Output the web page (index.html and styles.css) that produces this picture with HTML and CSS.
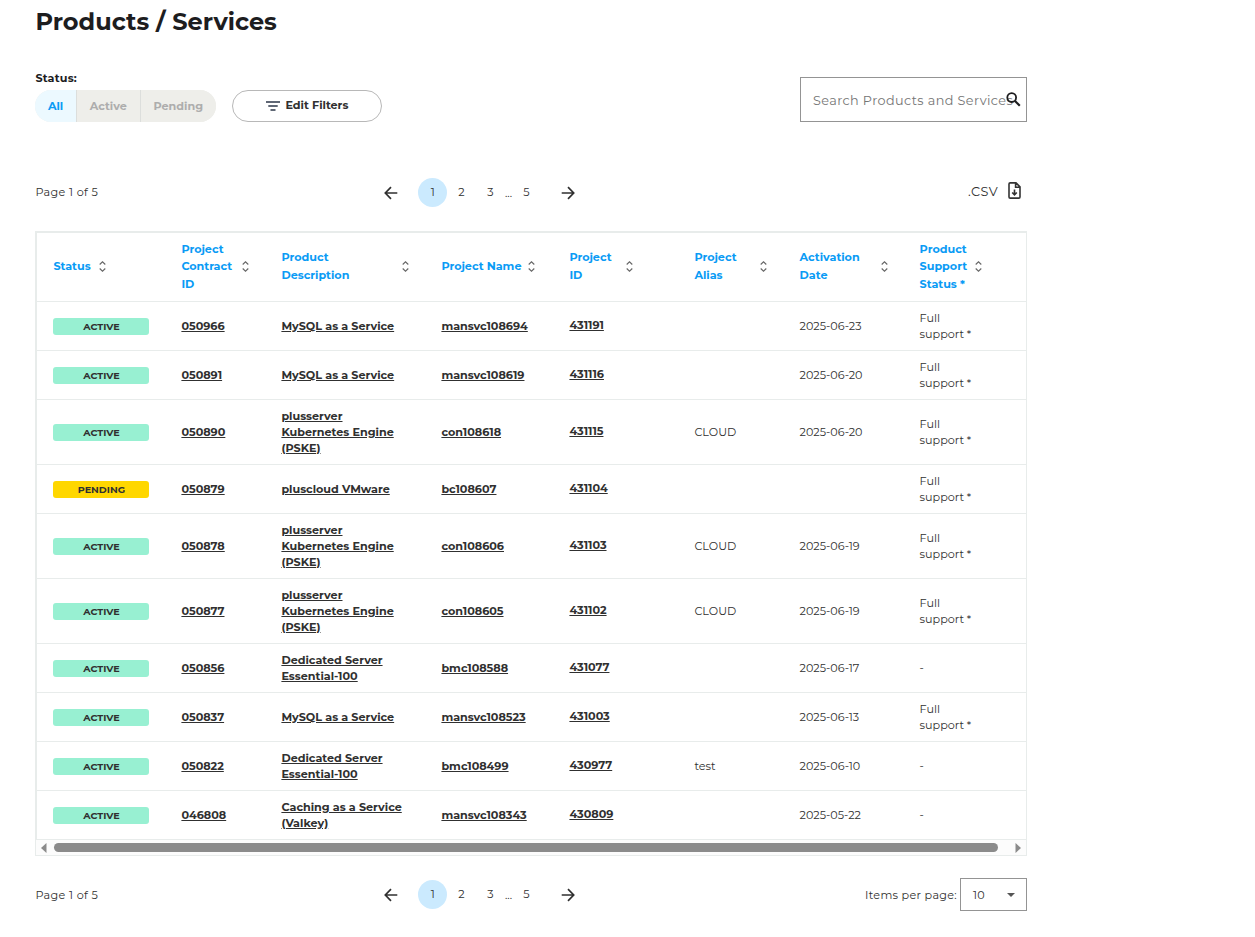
FILE: index.html
```html
<!DOCTYPE html>
<html lang="en"><head><meta charset="utf-8"><title>Products / Services</title><link rel="stylesheet" href="styles.css"></head>
<body>
<svg class="defs" width="0" height="0">
<symbol id="sort" viewBox="0 0 7 11"><path d="M.7 3.5 3.5.8l2.8 2.7M.7 7.5l2.8 2.7 2.8-2.7" fill="none" stroke="#666" stroke-width="1.1"/></symbol>
<symbol id="prev" viewBox="0 0 14 14"><path d="M13.3 7H1.5M7 1.2 1.3 7 7 12.8" fill="none" stroke="#303030" stroke-width="1.7"/></symbol>
<symbol id="next" viewBox="0 0 14 14"><path d="M.7 7h11.8M7 1.2 12.7 7 7 12.8" fill="none" stroke="#303030" stroke-width="1.7"/></symbol>
</svg>
<main class="page">
<h1 class="title">Products / Services</h1>
<section class="toolbar">
<div class="status"><div class="status-label">Status:</div>
<div class="controls"><div class="segments"><button class="seg on">All</button><button class="seg act">Active</button><button class="seg pen">Pending</button></div>
<button class="edit"><svg width="14" height="10" viewBox="0 0 14 10"><path d="M0 1h14M2.3 5h9.4M4.5 9h5" stroke="#5f6775" stroke-width="1.8"/></svg><span>Edit Filters</span></button></div></div>
<div class="search"><span class="ph">Search Products and Services</span><svg class="glass" width="15" height="15" viewBox="0 0 15 15"><circle cx="5.7" cy="5.6" r="4.4" fill="none" stroke="#1d1d1f" stroke-width="1.8"/><path d="m8.8 8.8 5 5" stroke="#1d1d1f" stroke-width="2.2"/></svg></div>
</section>
<nav class="pager top"><span class="count">Page 1 of 5</span>
<div class="pages"><svg width="14" height="14"><use href="#prev"/></svg><b class="num cur">1</b><b class="num">2</b><b class="num">3</b><b class="dots">...</b><b class="num last">5</b><svg width="14" height="14"><use href="#next"/></svg></div>
<div class="csv"><span>.CSV</span><svg width="13" height="17" viewBox="0 0 13 17"><path d="M1 2.1Q1 .9 2.2.9H8l4 4v10q0 1.2-1.2 1.2H2.2Q1 16.1 1 14.9zM7.6 1v4.3H12M6.5 7.5v5.3M4.2 10.5l2.3 2.4 2.3-2.4" fill="none" stroke="#333" stroke-width="1.6"/></svg></div></nav>
<div class="grid">
<table class="table">
<colgroup><col class="c1"><col class="c2"><col class="c3"><col class="c4"><col class="c5"><col class="c6"><col class="c7"><col class="c8"></colgroup>
<thead><tr>
<th><div class="head h1"><span>Status</span><svg width="7" height="11"><use href="#sort"/></svg></div></th>
<th><div class="head h2"><span>Project<br>Contract<br>ID</span><svg width="7" height="11"><use href="#sort"/></svg></div></th>
<th><div class="head h3"><span>Product<br>Description</span><svg width="7" height="11"><use href="#sort"/></svg></div></th>
<th><div class="head h4"><span>Project Name</span><svg width="7" height="11"><use href="#sort"/></svg></div></th>
<th><div class="head h5"><span>Project<br>ID</span><svg width="7" height="11"><use href="#sort"/></svg></div></th>
<th><div class="head h6"><span>Project<br>Alias</span><svg width="7" height="11"><use href="#sort"/></svg></div></th>
<th><div class="head h7"><span>Activation<br>Date</span><svg width="7" height="11"><use href="#sort"/></svg></div></th>
<th><div class="head h8"><span>Product<br>Support<br>Status *</span><svg width="7" height="11"><use href="#sort"/></svg></div></th>
</tr></thead>
<tbody>
<tr><td><div class="badge">ACTIVE</div></td><td><a>050966</a></td><td><a>MySQL as a Service</a></td><td><a>mansvc108694</a></td><td class="pid"><a>431191</a></td><td></td><td>2025-06-23</td><td>Full<br>support *</td></tr>
<tr><td><div class="badge">ACTIVE</div></td><td><a>050891</a></td><td><a>MySQL as a Service</a></td><td><a>mansvc108619</a></td><td class="pid"><a>431116</a></td><td></td><td>2025-06-20</td><td>Full<br>support *</td></tr>
<tr class="tall"><td><div class="badge">ACTIVE</div></td><td><a>050890</a></td><td><a>plusserver<br>Kubernetes Engine<br>(PSKE)</a></td><td><a>con108618</a></td><td class="pid"><a>431115</a></td><td>CLOUD</td><td>2025-06-20</td><td>Full<br>support *</td></tr>
<tr><td><div class="badge wait">PENDING</div></td><td><a>050879</a></td><td><a>pluscloud VMware</a></td><td><a>bc108607</a></td><td class="pid"><a>431104</a></td><td></td><td></td><td>Full<br>support *</td></tr>
<tr class="tall"><td><div class="badge">ACTIVE</div></td><td><a>050878</a></td><td><a>plusserver<br>Kubernetes Engine<br>(PSKE)</a></td><td><a>con108606</a></td><td class="pid"><a>431103</a></td><td>CLOUD</td><td>2025-06-19</td><td>Full<br>support *</td></tr>
<tr class="tall"><td><div class="badge">ACTIVE</div></td><td><a>050877</a></td><td><a>plusserver<br>Kubernetes Engine<br>(PSKE)</a></td><td><a>con108605</a></td><td class="pid"><a>431102</a></td><td>CLOUD</td><td>2025-06-19</td><td>Full<br>support *</td></tr>
<tr><td><div class="badge">ACTIVE</div></td><td><a>050856</a></td><td><a>Dedicated Server<br>Essential-100</a></td><td><a>bmc108588</a></td><td class="pid"><a>431077</a></td><td></td><td>2025-06-17</td><td>-</td></tr>
<tr><td><div class="badge">ACTIVE</div></td><td><a>050837</a></td><td><a>MySQL as a Service</a></td><td><a>mansvc108523</a></td><td class="pid"><a>431003</a></td><td></td><td>2025-06-13</td><td>Full<br>support *</td></tr>
<tr><td><div class="badge">ACTIVE</div></td><td><a>050822</a></td><td><a>Dedicated Server<br>Essential-100</a></td><td><a>bmc108499</a></td><td class="pid"><a>430977</a></td><td>test</td><td>2025-06-10</td><td>-</td></tr>
<tr><td><div class="badge">ACTIVE</div></td><td><a>046808</a></td><td><a>Caching as a Service<br>(Valkey)</a></td><td><a>mansvc108343</a></td><td class="pid"><a>430809</a></td><td></td><td>2025-05-22</td><td>-</td></tr>
</tbody></table>
<div class="scroll"><svg width="6" height="10"><path d="M5.5 0v10L0 5z" fill="#8b8b8b"/></svg><div class="thumb"></div><svg width="6" height="10"><path d="M.5 0v10L6 5z" fill="#8b8b8b"/></svg></div>
</div>
<nav class="pager bottom"><span class="count">Page 1 of 5</span>
<div class="pages"><svg width="14" height="14"><use href="#prev"/></svg><b class="num cur">1</b><b class="num">2</b><b class="num">3</b><b class="dots">...</b><b class="num last">5</b><svg width="14" height="14"><use href="#next"/></svg></div>
<div class="per"><span>Items per page:</span><div class="select"><span>10</span><svg width="8" height="4"><path d="M0 0h8L4 4z" fill="#555"/></svg></div></div></nav>
</main>
</body></html>
```
FILE: styles.css
```css
*{box-sizing:border-box}
body{margin:0;background:#fff;color:#303030;font-family:Montserrat,Inter,sans-serif;font-size:11.2px;overflow:hidden}
button{font:inherit;border:0;padding:0;margin:0}
svg{display:block;flex:none}
.defs{position:absolute}
.page{width:1027px;padding-left:35.4px}
.title{margin:0;height:70px;padding-top:8px;font-size:24px;line-height:28px;font-weight:700;color:#1d1d1f}
.toolbar{display:flex;justify-content:space-between;height:108px}
.status-label{height:20px;line-height:17px;font-weight:700;letter-spacing:.2px;color:#1d1d1f}
.controls{display:flex;gap:16px}
.segments{display:flex;width:181px;height:32px;border-radius:16px;overflow:hidden;background:#eeeeea}
.seg{background:#eeeeea;color:#adadad;font-weight:700;border-right:1px solid #dcdedc}
.on{width:41.4px;background:#ecf9ff;color:#0a9bf5}
.act{width:64px}
.pen{width:75px;border:0}
.edit{display:flex;align-items:center;justify-content:center;gap:5px;width:150px;height:32px;border:1px solid #b8b8b8;border-radius:16px;background:#fff;color:#303030;font-weight:700}
.edit span{padding-bottom:2px}
.search{position:relative;width:227px;height:45px;margin-top:7px;border:1px solid #949494;padding-left:12px;line-height:45px;font-size:12.8px;letter-spacing:.4px;color:#757575;white-space:nowrap}
.glass{position:absolute;left:204.5px;top:14px}
.pager{display:grid;grid-template-columns:349px 1fr auto;align-items:center}
.count{letter-spacing:.36px}
.top{height:29px;margin-bottom:24px}
.top .count,.top .csv{padding-bottom:2px}
.bottom{height:33px;margin-top:22px}
.pages{display:flex;align-items:center}
.num{width:29px;height:29px;line-height:29px;text-align:center;font-weight:400}
.cur{margin:0 -.5px 0 20px;border-radius:50%;background:#cbeafe}
.dots{width:7px;font-weight:400;text-align:center}
.last{margin:0 20.5px 0 0}
.csv{display:flex;align-items:center;gap:10px;margin-right:6px;font-size:12.8px;letter-spacing:.4px}
.csv svg{margin-bottom:2px}
.grid{height:625px;border:1px solid #e8eceb;border-top-width:2px}
.table{width:989.6px;table-layout:fixed;border-collapse:separate;border-spacing:0;border-left:1px solid #e8eceb}
.c1{width:128px}.c2{width:100px}.c3{width:160px}.c4{width:128px}.c5{width:125px}.c6{width:105.2px}.c7{width:120px}.c8{width:122.4px}
th{height:69px;padding:0 0 0 16px;text-align:left;color:#0a9bf5;line-height:17.6px;font-weight:700;border-bottom:1px solid #e8eceb}
.head{display:flex;align-items:center}
.head span{white-space:nowrap}
.head svg{margin-bottom:2px}
.h1 span{width:45.4px}.h2 span{width:61px}.h3 span{width:121px}.h4 span{width:87px}.h5 span{width:57px}.h6 span{width:66px}.h7 span{width:81px}.h8 span{width:55px}
td{height:49px;padding:0 0 0 16px;line-height:16px;border-bottom:1px solid #e8eceb;white-space:nowrap}
.tall td{height:65px}
td a{font-weight:700;text-decoration:underline}
.pid{padding-bottom:2px}
.badge{width:96px;height:17px;border-radius:3px;background:#98f0d2;text-align:center;font-size:9.6px;font-weight:700;line-height:18px}
.wait{background:#ffd700}
.scroll{display:flex;align-items:center;height:15px;background:#fcfcfc;padding:0 5px}
.thumb{width:944px;height:9px;margin:0 auto 0 7px;border-radius:5px;background:#8b8b8b}
.per{display:flex;align-items:center;gap:3px;letter-spacing:.3px}
.select{display:flex;align-items:center;justify-content:space-between;width:67px;height:33px;padding:0 11px 0 12px;border:1px solid #949494}
```
